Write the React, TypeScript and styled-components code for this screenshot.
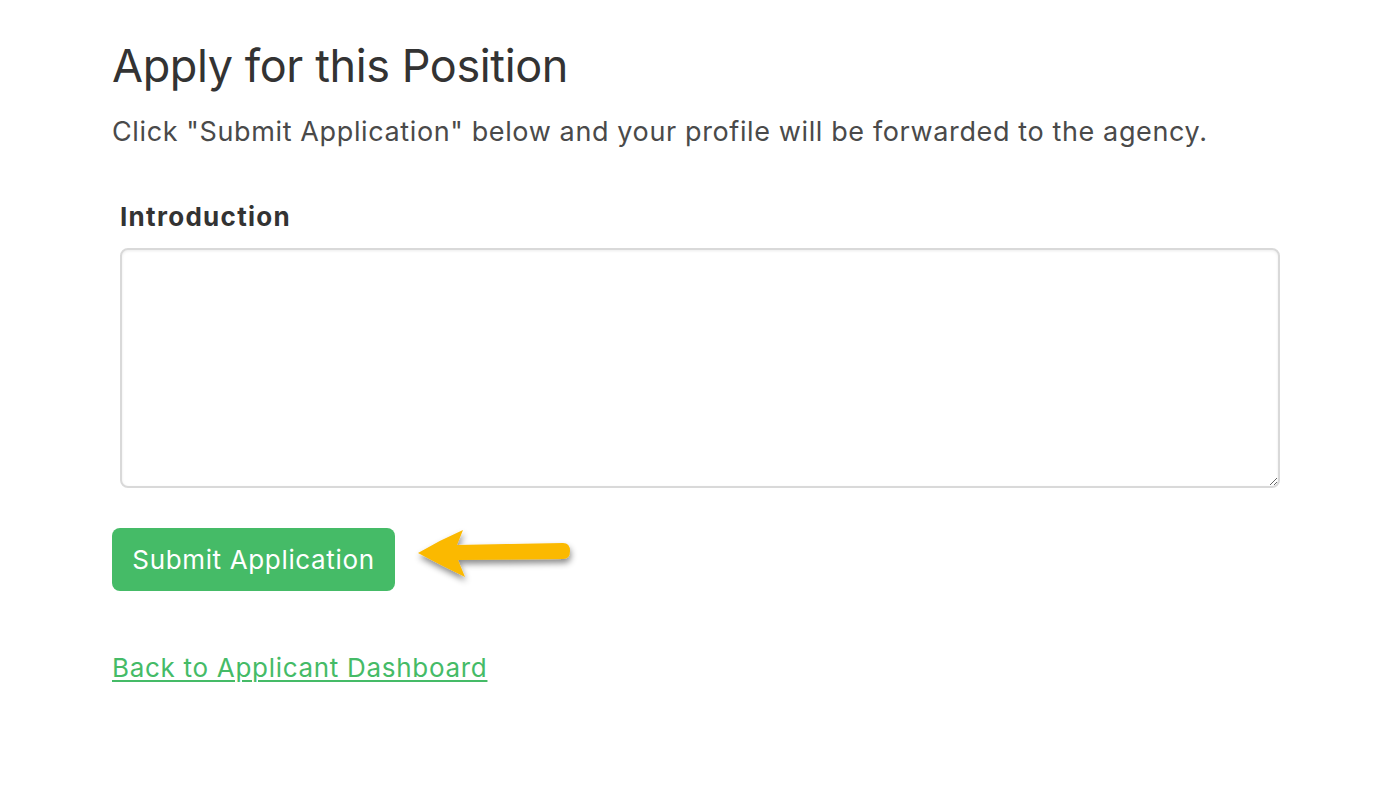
import React from "react";
import styled, { createGlobalStyle } from "styled-components";

const Global = createGlobalStyle`
  html, body { margin: 0; padding: 0; background: #ffffff; }
  body { font-family: Inter, "Noto Sans", "Liberation Sans", sans-serif; color: #333333; }
`;

const Page = styled.main`
  padding: 36px 112px 0 112px;
  width: 1168px;
`;

const Title = styled.h1`
  margin: 0;
  font-size: 45px;
  font-weight: 400;
  line-height: 60px;
  color: #333333;
  letter-spacing: -0.4px;
`;

const Lead = styled.p`
  margin: 18px 0 0 0;
  font-size: 27px;
  line-height: 36px;
  letter-spacing: 0.62px;
  color: #4a4a4a;
`;

const Field = styled.div`
  margin-top: 51px;
  padding-left: 8px;
  display: flex;
  flex-direction: column;
  gap: 15px;
`;

const Label = styled.label`
  font-size: 26px;
  font-weight: 700;
  line-height: 32px;
  letter-spacing: 1.3px;
  color: #333333;
`;

const TextArea = styled.textarea`
  box-sizing: border-box;
  width: 1160px;
  height: 240px;
  border: 2px solid #d9d9d9;
  border-radius: 8px;
  box-shadow: inset 0 1px 3px rgba(0, 0, 0, 0.08);
  resize: both;
  font-family: inherit;
  font-size: 20px;
  padding: 10px;
  outline: none;
`;

const Actions = styled.div`
  margin-top: 40px;
  display: flex;
  align-items: flex-start;
  gap: 23px;
`;

const SubmitButton = styled.button`
  box-sizing: border-box;
  width: 283px;
  height: 63px;
  border: none;
  border-radius: 8px;
  background: #45bb67;
  color: #ffffff;
  font-family: inherit;
  font-size: 26px;
  letter-spacing: 0.65px;
  font-weight: 400;
  cursor: pointer;
`;

const ArrowSvg = styled.svg`
  display: block;
  overflow: visible;
`;

const BackLink = styled.a`
  display: inline-block;
  margin-top: 60px;
  font-size: 26px;
  line-height: 34px;
  letter-spacing: 0.7px;
  color: #45bb67;
  text-decoration: underline;
  text-underline-offset: 3px;
  text-decoration-thickness: 2px;
`;

const Arrow = () => (
  <ArrowSvg width="160" height="60" viewBox="0 0 160 60">
    <defs>
      <filter id="sh" x="-20%" y="-40%" width="140%" height="180%">
        <feDropShadow dx="1" dy="4" stdDeviation="3" floodColor="#000" floodOpacity="0.45" />
      </filter>
    </defs>
    <g filter="url(#sh)">
      <path
        d="M0 25 Q22 12 45 2 L39 17 L145 15 Q152 15 152 23 Q152 31 145 31 L40 32 L47 49 Q22 37 0 25 Z"
        fill="#fbb900"
      />
    </g>
  </ArrowSvg>
);

export default function App() {
  return (
    <>
      <Global />
      <Page>
        <Title>Apply for this Position</Title>
        <Lead>Click "Submit Application" below and your profile will be forwarded to the agency.</Lead>
        <Field>
          <Label htmlFor="intro">Introduction</Label>
          <TextArea id="intro" />
        </Field>
        <Actions>
          <SubmitButton type="button">Submit Application</SubmitButton>
          <Arrow />
        </Actions>
        <BackLink href="#">Back to Applicant Dashboard</BackLink>
      </Page>
    </>
  );
}
